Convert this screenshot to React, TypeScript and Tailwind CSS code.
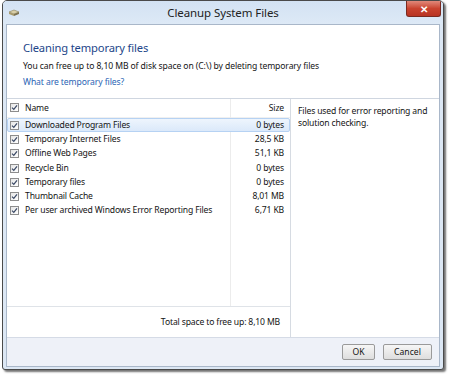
import React from "react";

const ROWS = [
  { name: "Downloaded Program Files", size: "0 bytes" },
  { name: "Temporary Internet Files", size: "28,5 KB" },
  { name: "Offline Web Pages", size: "51,1 KB" },
  { name: "Recycle Bin", size: "0 bytes" },
  { name: "Temporary files", size: "0 bytes" },
  { name: "Thumbnail Cache", size: "8,01 MB" },
  { name: "Per user archived Windows Error Reporting Files", size: "6,71 KB" },
];

function Check() {
  return (
    <span className="w-[9px] h-[9px] shrink-0 border border-[#8d8d8d] bg-gradient-to-br from-[#e6e6e6] to-white flex items-center justify-center">
      <svg width="7" height="7" viewBox="0 0 7 7">
        <path d="M1 3.6 L2.8 5.4 L6 1.4" fill="none" stroke="#3c4a66" strokeWidth="1.3" />
      </svg>
    </span>
  );
}

function CleanupIcon() {
  return (
    <svg width="12" height="10" viewBox="0 0 12 10">
      <path d="M1 4 L6 2 L11 4 L6 6 Z" fill="#d9cfa8" stroke="#8a7d55" strokeWidth="0.6" />
      <path d="M1 4 L1 6 L6 8 L6 6 Z" fill="#a89a6c" />
      <path d="M6 6 L6 8 L11 6 L11 4 Z" fill="#7d7250" />
    </svg>
  );
}

export default function App() {
  return (
    <div className="w-[450px] h-[376px] bg-white pl-[2px] font-['Noto_Sans',sans-serif] text-[#141414]">
      <div className="w-[442px] h-[370px] flex flex-col border border-[#4a4a4a] rounded-t-[5px] rounded-b-[3px] bg-[#dce7f4] shadow-[2px_2px_2px_rgba(0,0,0,0.55)] overflow-hidden">
        {/* Title bar */}
        <div className="relative h-[23px] shrink-0 flex items-center justify-center bg-gradient-to-b from-[#d3e2f3] to-[#dde9f6]">
          <div className="absolute left-[5px] top-[7px]">
            <CleanupIcon />
          </div>
          <span className="text-[11.5px] text-[#222] tracking-[-0.1px]">Cleanup System Files</span>
          <div className="absolute right-[2px] top-0 w-[35px] h-[16px] rounded-b-[3px] border border-t-0 border-[#7a2a20] bg-gradient-to-b from-[#e0887a] via-[#c9432f] to-[#b83423] flex items-center justify-center">
            <span className="text-white text-[10px] font-bold leading-none">✕</span>
          </div>
        </div>

        {/* Content */}
        <div className="flex-1 mx-[3px] mb-[2px] flex flex-col bg-white border border-[#a9b7c9]">
          <div className="h-[73px] shrink-0 pl-[16px] pt-[15px]">
            <div className="text-[11.2px] leading-[16px] text-[#1d4689] tracking-[-0.15px]">Cleaning temporary files</div>
            <div className="mt-[3px] text-[8.6px] leading-[14px] tracking-[-0.1px]">
              You can free up to 8,10 MB of disk space on (C:\) by deleting temporary files
            </div>
            <div className="mt-[2px] text-[8.6px] leading-[14px] text-[#2a64b4] tracking-[-0.1px]">What are temporary files?</div>
          </div>

          <div className="flex-1 flex border-t border-[#cfd6e0]">
            {/* List */}
            <div className="w-[284px] shrink-0 flex flex-col border-r border-[#d6dbe2]">
              <div className="flex-1 flex flex-col relative">
                <div className="absolute left-[223px] top-0 bottom-0 w-px bg-[#ececec]" />
                <div className="h-[19px] flex items-center text-[8.6px] tracking-[-0.15px] border-b border-[#f0f0f0]">
                  <div className="w-[224px] flex items-center pl-[3px] gap-[6px]">
                    <Check />
                    <span>Name</span>
                  </div>
                  <div className="flex-1 text-right pr-[6px]">Size</div>
                </div>
                {ROWS.map((r, i) => (
                  <div
                    key={r.name}
                    className={`h-[14.3px] flex items-center text-[8.6px] tracking-[-0.15px] relative ${
                      i === 0 ? "bg-gradient-to-b from-[#eef5fd] to-[#dbe9fa] border border-[#b6d2f3] rounded-[2px]" : "border border-transparent"
                    }`}
                  >
                    <div className="w-[223px] flex items-center pl-[2px] gap-[6px]">
                      <Check />
                      <span className="whitespace-nowrap">{r.name}</span>
                    </div>
                    <div className="flex-1 text-right pr-[5px]">{r.size}</div>
                  </div>
                ))}
              </div>
              <div className="h-[31px] shrink-0 border-t border-[#dfe3e8] flex items-center justify-end pr-[10px] text-[8.6px] tracking-[-0.15px]">
                Total space to free up: 8,10 MB
              </div>
            </div>
            {/* Description */}
            <div className="flex-1 pl-[7px] pt-[6px] pr-[8px] text-[8.6px] leading-[12px] tracking-[-0.15px]">
              Files used for error reporting and solution checking.
            </div>
          </div>

          {/* Footer */}
          <div className="h-[29px] shrink-0 bg-[#eef1f8] border-t border-[#d5dbe6] flex items-center justify-end gap-[8px] pr-[7px]">
            <button className="w-[33px] h-[16px] border border-[#9a9a9a] rounded-[2px] bg-gradient-to-b from-[#f6f6f6] to-[#dedede] text-[8.6px] leading-none">OK</button>
            <button className="w-[49px] h-[16px] border border-[#9a9a9a] rounded-[2px] bg-gradient-to-b from-[#f6f6f6] to-[#dedede] text-[8.6px] leading-none">Cancel</button>
          </div>
        </div>
      </div>
    </div>
  );
}
